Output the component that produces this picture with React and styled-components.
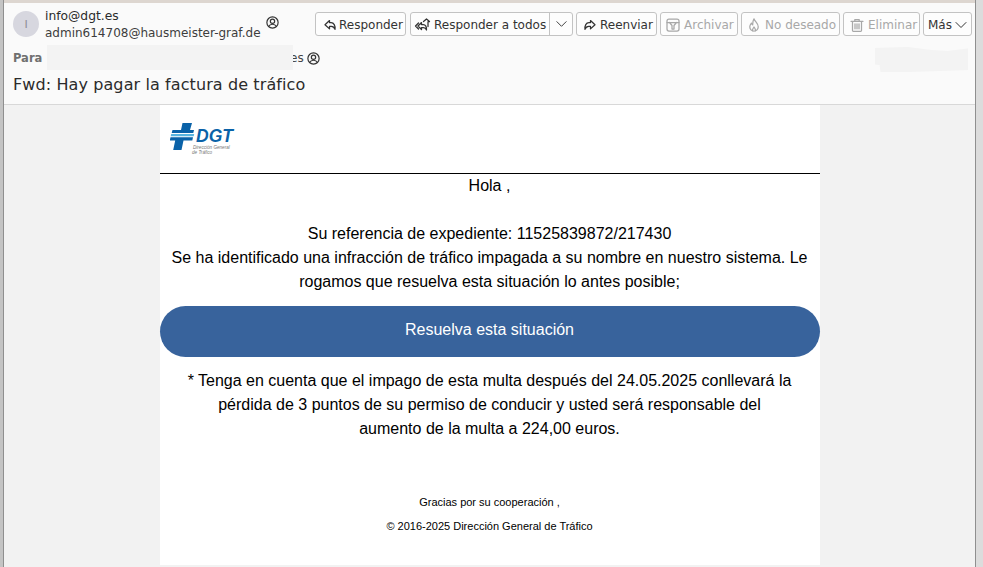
import React from 'react';
import styled, { createGlobalStyle } from 'styled-components';

const Global = createGlobalStyle`
  html, body { margin: 0; padding: 0; height: 100%; overflow: hidden; background: #f2f2f2; }
  #root { height: 100%; }
`;

const Frame = styled.div`
  width: 983px; height: 567px; box-sizing: border-box; overflow: hidden;
  display: flex; background: #f2f2f2;
  font-family: "DejaVu Sans", sans-serif;
`;
const EdgeLeft = styled.div`
  width: 4px; flex: none; background: #c4c4c4; border-right: 1px solid #8f8f8f; box-sizing: border-box;
`;
const EdgeRight = styled.div`
  width: 8px; flex: none; background: #dcdcdc; border-left: 1px solid #8f8f8f; box-sizing: border-box;
`;
const Main = styled.div`
  flex: 1; min-width: 0; display: flex; flex-direction: column;
`;
const Header = styled.header`
  position: relative;
  height: 105px; flex: none; box-sizing: border-box;
  background: #fafafa;
  border-top: 3px solid #ddd6d0;
  border-bottom: 1px solid #d8d8d8;
  display: flex; flex-direction: column;
  padding: 0 3px 0 9px;
`;
const TopRow = styled.div`
  display: flex; align-items: flex-start; height: 41px;
`;
const Avatar = styled.div`
  width: 26px; height: 26px; border-radius: 50%; background: #d7d7df; color: #8d8d95;
  font-size: 11px; display: flex; align-items: center; justify-content: center;
  margin-top: 8px; margin-right: 6px; flex: none;
`;
const Sender = styled.div`
  width: 221px; flex: none; font-size: 12.3px; line-height: 17px; color: #2b2b2b; padding-top: 5px;
`;
const SenderMail = styled.div`
  color: #3d3d3d; font-size: 12px; margin-top: 0;
`;
const ContactGlyph = styled.svg`
  width: 13px; height: 13px; flex: none; display: block;
  margin: ${p => p.$m || '0'};
`;
const Toolbar = styled.div`
  display: flex; margin-left: auto; padding-top: 9px;
`;
const Btn = styled.div`
  height: 24px; width: ${p => p.$w}px; margin-left: ${p => p.$gap || 0}px; box-sizing: border-box; flex: none;
  border: 1px solid #c3c3c3; border-radius: 3px; background: #fdfdfd;
  display: flex; align-items: center; gap: ${p => p.$space ?? 4}px;
  padding-left: ${p => p.$pad || 7}px; padding-top: 1px;
  font-size: 12px; white-space: nowrap;
  color: ${p => p.$off ? '#a8a8a8' : '#333'};
`;
const Split = styled.span`
  align-self: stretch; margin: -1px 0 0 auto; border-left: 1px solid #c3c3c3; width: 23px; box-sizing: border-box;
  display: flex; align-items: center; justify-content: center;
`;
const Icon = styled.svg`
  width: ${p => p.$w || 14}px; height: 14px; flex: none; display: block;
  fill: none; stroke: currentColor; stroke-width: ${p => p.$sw || 1.25}; stroke-linecap: round; stroke-linejoin: round;
`;
const ToRow = styled.div`
  display: flex; align-items: center; height: 24px; margin-top: 2px; font-size: 12px; color: #555;
`;
const ToLabel = styled.span`
  font-weight: 700; font-size: 11.5px; color: #707070; width: 34px; flex: none;
`;
const ToValue = styled.span`
  margin-left: 243px; color: #444;
`;
const Redact = styled.div`
  position: absolute; left: 43px; top: 42px; width: 246px; height: 25px; background: #f3f3f3;
`;
const Smudge = styled.div`
  position: absolute; left: 871px; top: 44px; width: 93px; height: 25px;
  background: #f3f3f3;
  clip-path: polygon(0 4%, 35% 0, 60% 12%, 78% 16%, 100% 6%, 100% 92%, 35% 100%, 6% 100%, 5% 72%, 0 70%);
  filter: blur(.5px);
`;
const Subject = styled.div`
  font-size: 16px; line-height: 24px; color: #2b2b2b; margin-top: 3px; letter-spacing: .1px;
`;
const Body = styled.main`
  flex: 1; display: flex; justify-content: center; min-height: 0;
`;
const Sheet = styled.div`
  width: 660px; height: 460px; background: #fff; color: #000; text-align: center;
  font-family: "Liberation Sans", Arial, sans-serif; font-size: 16px; line-height: 24px;
`;
const LogoBar = styled.div`
  height: 69px; box-sizing: border-box; border-bottom: 1px solid #000; padding: 16px 0 0 10px; text-align: left;
`;
const LogoMark = styled.svg`
  display: block;
`;
const Para = styled.p`
  margin: 0; padding: ${p => p.$pad || '0'};
`;
const Cta = styled.div`
  height: 51px; margin-top: 12px; padding-bottom: 4px; box-sizing: border-box; border-radius: 26px; background: #38639c; color: #fff;
  display: flex; align-items: center; justify-content: center;
`;
const Note = styled.p`
  margin: 12px 0 0; padding: 0 27px;
`;
const Foot = styled.p`
  margin: ${p => p.$m}; font-size: 11px; line-height: 24px;
`;

const Person = ({ m }) => (
  <ContactGlyph $m={m} viewBox="0 0 12 12" fill="none" stroke="#333" strokeWidth="1.1">
    <circle cx="6" cy="6" r="5.2"/>
    <circle cx="6" cy="4.8" r="2"/>
    <path d="M2.6 9.6c.6-1.6 1.9-2 3.4-2s2.8.4 3.4 2"/>
  </ContactGlyph>
);
const Chevron = ({ w = 13 }) => (
  <Icon viewBox="0 0 14 14" $w={w} $sw={1}><path d="M2 4.500 7 9.500l5-5"/></Icon>
);

const Logo = () => (
  <LogoMark width="66" height="36" viewBox="0 0 66 36" aria-label="DGT">
    <path fill="#0a62a8" d="M12.500 2h9.500l-2 7h4l-.7 3H1.700l.8-3h8.500z"/>
    <path fill="#58b4e0" d="M1.200 13h23l-.5 2.200H.7z"/>
    <path fill="#0a62a8" d="M.5 16.200H23l-.7 3.300h-8.800l-2 9.500H3.200l2-9.500H-.2z"/>
    <text x="26" y="21" fontFamily="Liberation Sans, sans-serif" fontSize="17.500" fontWeight="700" fontStyle="italic" fill="#0a62a8">DGT</text>
    <text x="23" y="28" fontFamily="Liberation Sans, sans-serif" fontSize="4.600" fontStyle="italic" fill="#777">Dirección General</text>
    <text x="22" y="33" fontFamily="Liberation Sans, sans-serif" fontSize="4.600" fontStyle="italic" fill="#777">de Tráfico</text>
  </LogoMark>
);

export default function App() {
  return (
    <Frame>
      <Global />
      <EdgeLeft />
      <Main>
        <Header>
          <TopRow>
            <Avatar>I</Avatar>
            <Sender>
              info@dgt.es
              <SenderMail>admin614708@hausmeister-graf.de</SenderMail>
            </Sender>
            <Person m="13px 0 0 0" />
            <Toolbar>
              <Btn $w={91} $pad={7} $space={2}>
                <Icon viewBox="0 0 14 14"><path d="M6.500 2.500 2 6.700l4.500 4.200V8.400h1.800c1.800 0 2.900.9 3.700 3 .4-3.600-1.100-6.800-3.900-6.800H6.500z"/></Icon>Responder
              </Btn>
              <Btn $w={163} $gap={4} $pad={3} $space={3}>
                <Icon viewBox="0 0 17 14" $w={17}>
                  <path d="M4.500 5 1.500 8l3 3M7.500 4.500 4 8l3.500 3.500V9.500h2c1.400 0 2.400.8 3 2.500.3-3-1-5.500-3.200-5.500H7.500zM9.500 3.500l3-2.500 3 2.500h-1.500V8.500M11 3.500"/>
                </Icon>
                Responder a todos
                <Split><Chevron /></Split>
              </Btn>
              <Btn $w={81} $gap={3} $pad={6} $space={3}>
                <Icon viewBox="0 0 14 14"><path d="M7.500 2.500 12 6.700l-4.500 4.200V8.400H5.700c-1.800 0-2.900.9-3.700 3-.4-3.600 1.100-6.800 3.900-6.800h1.600z"/></Icon>
                Reenviar
              </Btn>
              <Btn $w={78} $gap={3} $off $pad={5}>
                <Icon viewBox="0 0 14 14">
                  <rect x="1" y="1" width="12" height="12" rx="2"/><path d="M1 4.500h12M3.500 4.500l2.500 3v3.500h2V7.500l2.500-3"/>
                </Icon>
                Archivar
              </Btn>
              <Btn $w={99} $gap={3} $off $pad={5}>
                <Icon viewBox="0 0 14 14">
                  <path d="M7 .8c.5 2.500 4.200 4.200 4.200 8A4.200 4.200 0 0 1 7 13.200a4.200 4.200 0 0 1-4.200-4.400c0-1.800.9-2.800 1.600-3.700.3 1.100.7 1.500 1.300 1.800C5.600 4.800 6 2.500 7 .8zM5.600 13c-.5-1.700.7-2.800 1.400-4 .7 1.200 1.900 2.300 1.400 4"/>
                </Icon>
                No deseado
              </Btn>
              <Btn $w={77} $gap={3} $off $pad={6}>
                <Icon viewBox="0 0 14 14">
                  <path d="M1 3.300h12M4.800 3.300V1.500h4.400v1.800M2.500 3.300v9.200a.8.8 0 0 0 .8.8h7.400a.8.8 0 0 0 .8-.8V3.300M5 5.800v5M7 5.800v5M9 5.800v5"/>
                </Icon>
                Eliminar
              </Btn>
              <Btn $w={49} $gap={3} $pad={4} $space={2}>
                Más<Chevron w={14} />
              </Btn>
            </Toolbar>
          </TopRow>
          <ToRow>
            <ToLabel>Para</ToLabel>
            <ToValue>es</ToValue>
            <Person m="0 0 0 3px" />
          </ToRow>
          <Subject>Fwd: Hay pagar la factura de tráfico</Subject>
          <Redact />
          <Smudge />
        </Header>
        <Body>
          <Sheet>
            <LogoBar><Logo /></LogoBar>
            <Para>Hola ,</Para>
            <Para $pad="24px 0 0">Su referencia de expediente: 11525839872/217430</Para>
            <Para>Se ha identificado una infracción de tráfico impagada a su nombre en nuestro sistema. Le rogamos que resuelva esta situación lo antes posible;</Para>
            <Cta>Resuelva esta situación</Cta>
            <Note>* Tenga en cuenta que el impago de esta multa después del 24.05.2025 conllevará la pérdida de 3 puntos de su permiso de conducir y usted será responsable del aumento de la multa a 224,00 euros.</Note>
            <Foot $m="49px 0 0">Gracias por su cooperación ,</Foot>
            <Foot $m="0">© 2016-2025 Dirección General de Tráfico</Foot>
          </Sheet>
        </Body>
      </Main>
      <EdgeRight />
    </Frame>
  );
}
